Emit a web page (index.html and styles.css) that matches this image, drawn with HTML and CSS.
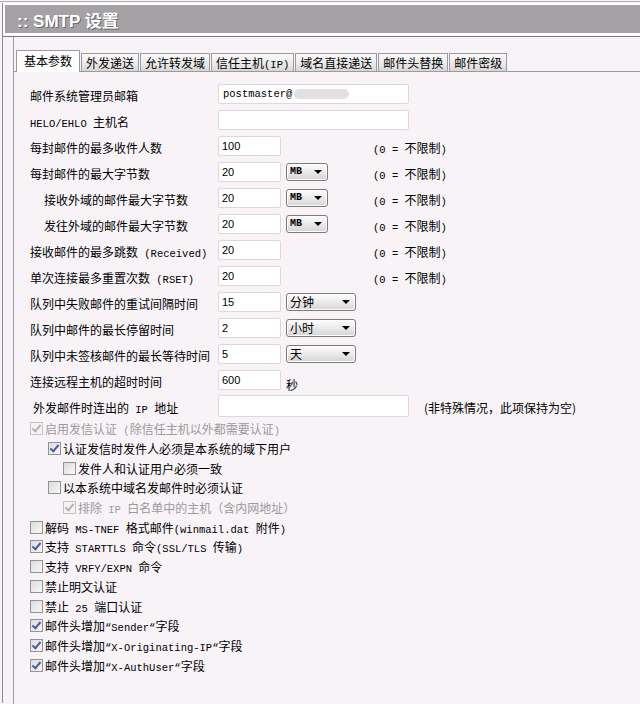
FILE: index.html
```html
<!DOCTYPE html>
<html lang="zh-CN">
<head>
<meta charset="utf-8">
<title>SMTP 设置</title>
<link rel="stylesheet" href="styles.css">
</head>
<body>
<div class="topline"></div>
<div class="frame">
  <div class="header"><h1>:: SMTP 设置</h1></div>
  <div class="content">
    <div class="inner">
      <div class="tabs">
        <div class="tab active">基本参数</div>
        <div class="tab">外发递送</div>
        <div class="tab">允许转发域</div>
        <div class="tab">信任主机<span class="m">(IP)</span></div>
        <div class="tab">域名直接递送</div>
        <div class="tab">邮件头替换</div>
        <div class="tab">邮件密级</div>
      </div>
      <div class="panel">
        <div class="form">
          <div class="row">
            <div class="lbl">邮件系统管理员邮箱</div>
            <div class="inp wide mono">postmaster@<span class="blur"></span></div>
          </div>
          <div class="row">
            <div class="lbl"><span class="m">HELO/EHLO </span>主机名</div>
            <div class="inp wide"></div>
          </div>
          <div class="row">
            <div class="lbl">每封邮件的最多收件人数</div>
            <div class="inp">100</div>
            <div class="unit"></div>
            <div class="note"><span class="m">(0 = </span>不限制<span class="m">)</span></div>
          </div>
          <div class="row">
            <div class="lbl">每封邮件的最大字节数</div>
            <div class="inp">20</div>
            <div class="unit"><div class="sel"><span class="m b">MB</span><span class="arr"></span></div></div>
            <div class="note"><span class="m">(0 = </span>不限制<span class="m">)</span></div>
          </div>
          <div class="row">
            <div class="lbl ind">接收外域的邮件最大字节数</div>
            <div class="inp">20</div>
            <div class="unit"><div class="sel"><span class="m b">MB</span><span class="arr"></span></div></div>
            <div class="note"><span class="m">(0 = </span>不限制<span class="m">)</span></div>
          </div>
          <div class="row">
            <div class="lbl ind">发往外域的邮件最大字节数</div>
            <div class="inp">20</div>
            <div class="unit"><div class="sel"><span class="m b">MB</span><span class="arr"></span></div></div>
            <div class="note"><span class="m">(0 = </span>不限制<span class="m">)</span></div>
          </div>
          <div class="row">
            <div class="lbl">接收邮件的最多跳数<span class="m"> (Received)</span></div>
            <div class="inp">20</div>
            <div class="unit"></div>
            <div class="note"><span class="m">(0 = </span>不限制<span class="m">)</span></div>
          </div>
          <div class="row">
            <div class="lbl">单次连接最多重置次数<span class="m"> (RSET)</span></div>
            <div class="inp">20</div>
            <div class="unit"></div>
            <div class="note"><span class="m">(0 = </span>不限制<span class="m">)</span></div>
          </div>
          <div class="row">
            <div class="lbl">队列中失败邮件的重试间隔时间</div>
            <div class="inp">15</div>
            <div class="unit"><div class="sel w">分钟<span class="arr"></span></div></div>
          </div>
          <div class="row">
            <div class="lbl">队列中邮件的最长停留时间</div>
            <div class="inp">2</div>
            <div class="unit"><div class="sel w">小时<span class="arr"></span></div></div>
          </div>
          <div class="row">
            <div class="lbl">队列中未签核邮件的最长等待时间</div>
            <div class="inp">5</div>
            <div class="unit"><div class="sel w">天<span class="arr"></span></div></div>
          </div>
          <div class="row">
            <div class="lbl">连接远程主机的超时时间</div>
            <div class="inp">600</div>
            <div class="unit"><span class="sec">秒</span></div>
          </div>
          <div class="row">
            <div class="lbl ip">外发邮件时连出的<span class="m"> IP </span>地址</div>
            <div class="inp wide tall"></div>
            <div class="note2">(非特殊情况，此项保持为空)</div>
          </div>
        </div>
        <div class="checks">
          <div class="cb dis"><span class="box on"></span><span class="t">启用发信认证<span class="m"> (</span>除信任主机以外都需要认证<span class="m">)</span></span></div>
          <div class="cb l2"><span class="box on"></span><span class="t">认证发信时发件人必须是本系统的域下用户</span></div>
          <div class="cb l3"><span class="box"></span><span class="t">发件人和认证用户必须一致</span></div>
          <div class="cb l2"><span class="box"></span><span class="t">以本系统中域名发邮件时必须认证</span></div>
          <div class="cb l3 dis"><span class="box on"></span><span class="t">排除<span class="m"> IP </span>白名单中的主机（含内网地址）</span></div>
          <div class="cb"><span class="box"></span><span class="t">解码<span class="m"> MS-TNEF </span>格式邮件<span class="m">(winmail.dat </span>附件<span class="m">)</span></span></div>
          <div class="cb"><span class="box on"></span><span class="t">支持<span class="m"> STARTTLS </span>命令<span class="m">(SSL/TLS </span>传输<span class="m">)</span></span></div>
          <div class="cb"><span class="box"></span><span class="t">支持<span class="m"> VRFY/EXPN </span>命令</span></div>
          <div class="cb"><span class="box"></span><span class="t">禁止明文认证</span></div>
          <div class="cb"><span class="box"></span><span class="t">禁止<span class="m"> 25 </span>端口认证</span></div>
          <div class="cb"><span class="box on"></span><span class="t">邮件头增加<span class="m">“Sender“</span>字段</span></div>
          <div class="cb"><span class="box on"></span><span class="t">邮件头增加<span class="m">“X-Originating-IP“</span>字段</span></div>
          <div class="cb"><span class="box on"></span><span class="t">邮件头增加<span class="m">“X-AuthUser“</span>字段</span></div>
        </div>
      </div>
    </div>
  </div>
</div>
</body>
</html>
```

FILE: styles.css
```css
html, body {
  margin: 0;
  padding: 0;
  background: #f7f3f7;
  height: 704px;
  overflow: hidden;
}
body {
  font-family: "Noto Sans CJK SC", "Liberation Sans", sans-serif;
  font-size: 12px;
  color: #000;
}
.topline {
  height: 1px;
  margin-top: 1px;
  background: #b0aeb0;
}
.frame {
  margin-left: 2px;
  margin-top: 1px;
  border-left: 1px solid #8c8a8c;
  height: 700px;
}
.header {
  border: 2px solid #ffffff;
  border-right: none;
  background: #a5a2a5;
  height: 28px;
  display: flex;
  align-items: center;
}
.header h1 {
  margin: 0 0 0 12px;
  font-family: "Liberation Sans", "Noto Sans CJK SC", sans-serif;
  font-size: 17px;
  font-weight: bold;
  color: #ffffff;
  text-shadow: 1px 1px 0 #6b696b;
}
.content {
  margin-top: 1px;
  border-top: 1px solid #7b797b;
}
.inner {
  margin-left: 10px;
  border-left: 1px solid #9c9a9c;
  padding-top: 13px;
  height: 660px;
}
.tabs {
  display: flex;
  align-items: flex-end;
  padding-left: 2px;
  gap: 1px;
  border-bottom: 1px solid #9c9a9c;
  height: 21px;
}
.tab {
  height: 18px;
  box-sizing: border-box;
  border: 1px solid #9c9a9c;
  border-bottom: none;
  padding: 0 4px;
  line-height: 17px;
  background: linear-gradient(#fafafa, #e9e9e9 60%, #d6d6d6);
  white-space: nowrap;
}
.tab.active {
  height: 22px;
  margin-bottom: -1px;
  background: #ffffff;
  padding: 0 7px;
  line-height: 20px;
}
.m {
  font-family: "Liberation Mono", monospace;
  font-size: 10.5px;
}
.b { font-weight: bold; font-size: 10px; }
.form {
  padding: 9px 0 0 16px;
}
.row {
  display: flex;
  align-items: center;
  height: 26px;
}
.lbl {
  width: 188px;
  flex: none;
  box-sizing: border-box;
  padding-top: 2px;
  white-space: nowrap;
}
.lbl.ind { padding-left: 14px; }
.lbl.ip { padding-left: 3px; }
.inp {
  width: 63px;
  height: 20px;
  flex: none;
  box-sizing: border-box;
  background: #ffffff;
  border: 1px solid #dcd8dc;
  border-radius: 2px;
  padding: 2px 3px 0;
  font-family: "Liberation Sans", sans-serif;
  font-size: 11px;
  line-height: 14px;
  display: flex;
  align-items: flex-start;
}
.inp.wide { width: 191px; }
.inp.tall { height: 22px; }
.inp.mono {
  font-family: "Liberation Mono", monospace;
  font-size: 10.5px;
  padding-left: 4px;
  align-items: center;
  padding-top: 0;
}
.blur {
  display: inline-block;
  width: 55px;
  height: 10px;
  background: #e2e0e2;
  border-radius: 5px;
  margin-left: 2px;
  filter: blur(0.6px);
}
.unit {
  width: 92px;
  flex: none;
  box-sizing: border-box;
  padding-left: 5px;
  display: flex;
  align-items: center;
}
.sel {
  width: 42px;
  height: 18px;
  box-sizing: border-box;
  border: 1px solid #7b797b;
  border-radius: 3px;
  background: linear-gradient(#fdfdfd, #ececec 45%, #d4d4d4);
  box-shadow: inset 0 0 0 1px #ffffff;
  display: flex;
  align-items: center;
  justify-content: space-between;
  padding: 0 5px 0 3px;
  font-size: 12px;
  line-height: 16px;
}
.sel.w { width: 70px; }
.arr {
  width: 0;
  height: 0;
  border-left: 4px solid transparent;
  border-right: 4px solid transparent;
  border-top: 4px solid #000;
}
.sec {
  padding-top: 8px;
}
.note {
  white-space: nowrap;
  padding-top: 2px;
}
.note2 {
  margin-left: 15px;
  white-space: nowrap;
  padding-top: 2px;
}
.checks {
  padding-left: 16px;
}
.cb {
  display: flex;
  align-items: center;
  height: 19.7px;
  white-space: nowrap;
}
.cb.l2 { padding-left: 18px; }
.cb.l3 { padding-left: 33px; }
.cb.dis { color: #9c9a9c; }
.t {
  white-space: pre;
}
.box {
  width: 13px;
  height: 13px;
  flex: none;
  box-sizing: border-box;
  border: 1px solid #949294;
  background: linear-gradient(135deg, #dcdcdc, #f8f8f8);
  margin-right: 2px;
  position: relative;
}
.box.on::after {
  content: "";
  position: absolute;
  left: 3px;
  top: 0px;
  width: 3px;
  height: 7px;
  border: solid #4a5d9c;
  border-width: 0 2px 2px 0;
  transform: rotate(40deg);
}
.dis .box {
  border-color: #c6c3c6;
  background: #f4f2f4;
}
.dis .box.on::after {
  border-color: #b5b2b5;
}
```
